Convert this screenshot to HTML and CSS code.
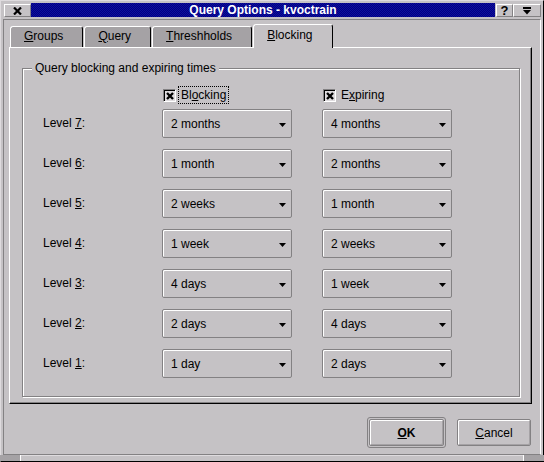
FILE: index.html
```html
<!DOCTYPE html>
<html>
<head>
<meta charset="utf-8">
<title>Query Options - kvoctrain</title>
<link rel="stylesheet" href="styles.css">
</head>
<body>
<div class="win">
  <div class="titlebar">
    <div class="tbtn close"><svg width="9" height="8" viewBox="0 0 9 8"><path d="M1 0.5 L8 7.5 M8 0.5 L1 7.5" stroke="#000" stroke-width="2.2"/></svg></div>
    <div class="caption">Query Options - kvoctrain</div>
    <div class="tbtn help">?</div>
    <div class="tbtn menu"><svg width="10" height="8" viewBox="0 0 10 8"><rect x="1" y="0" width="8" height="2" fill="#000"/><path d="M1 3 L9 3 L5 7.5 Z" fill="#000"/></svg></div>
  </div>
  <div class="client">
    <div class="tabs">
      <div class="tab"><u>G</u>roups</div>
      <div class="tab"><u>Q</u>uery</div>
      <div class="tab"><u>T</u>hreshholds</div>
      <div class="tab active"><u>B</u>locking</div>
    </div>
    <div class="panel">
      <fieldset class="group">
        <legend>Query blocking and expiring times</legend>
        <div class="inner">
          <div class="grid head">
            <span></span>
            <div class="check"><span class="box"><svg width="8" height="8" viewBox="0 0 8 8"><path d="M1 1 L7 7 M7 1 L1 7" stroke="#000" stroke-width="2.4"/></svg></span><span class="lbl focus">Bl<u>o</u>cking</span></div>
            <div class="check"><span class="box"><svg width="8" height="8" viewBox="0 0 8 8"><path d="M1 1 L7 7 M7 1 L1 7" stroke="#000" stroke-width="2.4"/></svg></span><span class="lbl">E<u>x</u>piring</span></div>
          </div>
          <div class="grid rows">
            <span class="lvl">Level <u>7</u>:</span>
            <div class="combo"><span>2 months</span><svg class="arrow" width="7" height="4" viewBox="0 0 7 4"><path d="M0 0 L7 0 L3.5 4 Z" fill="#000"/></svg></div>
            <div class="combo"><span>4 months</span><svg class="arrow" width="7" height="4" viewBox="0 0 7 4"><path d="M0 0 L7 0 L3.5 4 Z" fill="#000"/></svg></div>

            <span class="lvl">Level <u>6</u>:</span>
            <div class="combo"><span>1 month</span><svg class="arrow" width="7" height="4" viewBox="0 0 7 4"><path d="M0 0 L7 0 L3.5 4 Z" fill="#000"/></svg></div>
            <div class="combo"><span>2 months</span><svg class="arrow" width="7" height="4" viewBox="0 0 7 4"><path d="M0 0 L7 0 L3.5 4 Z" fill="#000"/></svg></div>

            <span class="lvl">Level <u>5</u>:</span>
            <div class="combo"><span>2 weeks</span><svg class="arrow" width="7" height="4" viewBox="0 0 7 4"><path d="M0 0 L7 0 L3.5 4 Z" fill="#000"/></svg></div>
            <div class="combo"><span>1 month</span><svg class="arrow" width="7" height="4" viewBox="0 0 7 4"><path d="M0 0 L7 0 L3.5 4 Z" fill="#000"/></svg></div>

            <span class="lvl">Level <u>4</u>:</span>
            <div class="combo"><span>1 week</span><svg class="arrow" width="7" height="4" viewBox="0 0 7 4"><path d="M0 0 L7 0 L3.5 4 Z" fill="#000"/></svg></div>
            <div class="combo"><span>2 weeks</span><svg class="arrow" width="7" height="4" viewBox="0 0 7 4"><path d="M0 0 L7 0 L3.5 4 Z" fill="#000"/></svg></div>

            <span class="lvl">Level <u>3</u>:</span>
            <div class="combo"><span>4 days</span><svg class="arrow" width="7" height="4" viewBox="0 0 7 4"><path d="M0 0 L7 0 L3.5 4 Z" fill="#000"/></svg></div>
            <div class="combo"><span>1 week</span><svg class="arrow" width="7" height="4" viewBox="0 0 7 4"><path d="M0 0 L7 0 L3.5 4 Z" fill="#000"/></svg></div>

            <span class="lvl">Level <u>2</u>:</span>
            <div class="combo"><span>2 days</span><svg class="arrow" width="7" height="4" viewBox="0 0 7 4"><path d="M0 0 L7 0 L3.5 4 Z" fill="#000"/></svg></div>
            <div class="combo"><span>4 days</span><svg class="arrow" width="7" height="4" viewBox="0 0 7 4"><path d="M0 0 L7 0 L3.5 4 Z" fill="#000"/></svg></div>

            <span class="lvl">Level <u>1</u>:</span>
            <div class="combo"><span>1 day</span><svg class="arrow" width="7" height="4" viewBox="0 0 7 4"><path d="M0 0 L7 0 L3.5 4 Z" fill="#000"/></svg></div>
            <div class="combo"><span>2 days</span><svg class="arrow" width="7" height="4" viewBox="0 0 7 4"><path d="M0 0 L7 0 L3.5 4 Z" fill="#000"/></svg></div>
          </div>
        </div>
      </fieldset>
    </div>
    <div class="buttons">
      <div class="default"><button class="btn ok"><u>O</u>K</button></div>
      <button class="btn cancel"><u>C</u>ancel</button>
    </div>
  </div>
  <div class="grips"><span class="grip"></span><span class="mid"></span><span class="grip"></span></div>
</div>
</body>
</html>
```

FILE: styles.css
```css
* { box-sizing: border-box; }
html, body { margin: 0; padding: 0; }
body {
  background: #c5c2c5;
  font-family: "Liberation Sans", Arial, sans-serif;
  font-size: 12px;
  color: #000;
}
u { text-underline-offset: 1px; }

.win {
  width: 544px;
  height: 462px;
  display: flex;
  flex-direction: column;
  background: #c5c2c5;
  border: 1px solid;
  border-color: #dedbde #000 #000 #dedbde;
  padding: 2px 2px 0 2px;
}

.titlebar { display: flex; height: 14px; flex: none; }
.tbtn {
  display: flex;
  align-items: center;
  justify-content: center;
  background: #c5c2c5;
  border: 1px solid;
  border-color: #fff #838183 #838183 #fff;
  margin-top: 1px;
}
.close { width: 27px; margin-left: 1px; }
.caption {
  flex: 1;
  background: repeating-conic-gradient(#000084 0 25%, #10109c 0 50%) 0 0 / 2px 2px;
  color: #fff;
  font-weight: bold;
  text-align: center;
  line-height: 14px;
  margin-right: 1px;
  white-space: nowrap;
}
.help { width: 17px; font-weight: bold; font-size: 13px; line-height: 12px; }
.menu { width: 28px; }

.client {
  flex: 1;
  margin-top: 2px;
  border: 1px solid;
  border-color: #838183 #fff #838183 #838183;
  padding: 4px 8px 0 5px;
  display: flex;
  flex-direction: column;
}

.tabs {
  display: flex;
  height: 23px;
  flex: none;
  padding-left: 1px;
  position: relative;
  z-index: 1;
}
.tab {
  margin-top: 2px;
  height: 21px;
  padding: 0 19px 0 13px;
  margin-right: 1px;
  background: #a5a2a5;
  border: 1px solid;
  border-bottom: none;
  border-color: #fff #000 transparent #fff;
  border-radius: 3px 3px 0 0;
  line-height: 19px;
  white-space: nowrap;
}
.tab.active {
  margin-top: 0;
  height: 24px;
  background: #c5c2c5;
  line-height: 21px;
}

.panel {
  height: 357px;
  flex: none;
  border: 1px solid;
  border-color: #fff #000 #000 #fff;
  box-shadow: inset -1px -1px 0 #838183;
  display: flex;
  flex-direction: column;
  padding: 0 11px 6px 12px;
}

.group {
  margin: 13px 0 0 0;
  padding: 0;
  border: 1px solid #838183;
  box-shadow: inset 1px 1px 0 #fff, 1px 1px 0 #fff;
  flex: 1;
  min-width: 0;
}
.group legend {
  margin-left: 9px;
  padding: 0 3px;
  line-height: 14px;
  background: #c5c2c5;
}
.inner { padding: 11px 0 0 20px; }

.grid {
  display: grid;
  grid-template-columns: 89px 130px 130px;
  column-gap: 30px;
}
.head { height: 18px; margin-bottom: 5px; align-items: center; }
.check { display: flex; align-items: center; padding-left: 1px; }
.box {
  width: 13px;
  height: 13px;
  display: flex;
  align-items: center;
  justify-content: center;
  background: #dedbde;
  border: 1px solid;
  border-color: #838183 #fff #fff #838183;
  box-shadow: inset 1px 1px 0 #000;
}
.box svg { margin: 1px 0 0 1px; }
.lbl {
  margin-left: 2px;
  border: 1px solid transparent;
  padding: 1px 2px;
  line-height: 14px;
}
.lbl.focus { border: 1px dotted #000; }

.rows { grid-auto-rows: 29px; row-gap: 11px; }
.lvl { align-self: center; margin-top: -2px; white-space: nowrap; }
.combo {
  display: flex;
  align-items: center;
  justify-content: space-between;
  border: 1px solid #838183;
  border-radius: 2px;
  box-shadow: inset 1px 1px 0 #fff;
  padding: 0 5px 0 8px;
}
.arrow { margin-top: 2px; }

.buttons {
  display: flex;
  justify-content: flex-end;
  align-items: center;
  gap: 11px;
  margin-top: 13px;
  height: 31px;
  padding-right: 1px;
  flex: none;
}
.default {
  border: 1px solid #838183;
  border-radius: 3px;
  padding: 1px;
  display: flex;
}
.btn {
  font: inherit;
  color: #000;
  height: 27px;
  background: #c5c2c5;
  border: 1px solid #838183;
  border-radius: 2px;
  box-shadow: inset 1px 1px 0 #fff, inset -1px -1px 0 #a5a2a5;
  padding: 0;
}
.ok { width: 75px; font-weight: bold; }
.cancel { width: 74px; }

.grips {
  display: flex;
  height: 6px;
  flex: none;
  margin: 0 -3px;
}
.grip { width: 21px; background: #a5a2a5; border-right: 1px solid #fff; }
.grip:last-child { border-right: none; border-left: 1px solid #fff; }
.mid { flex: 1; background: #c5c2c5; border-top: 1px solid #dedbde; }
```
